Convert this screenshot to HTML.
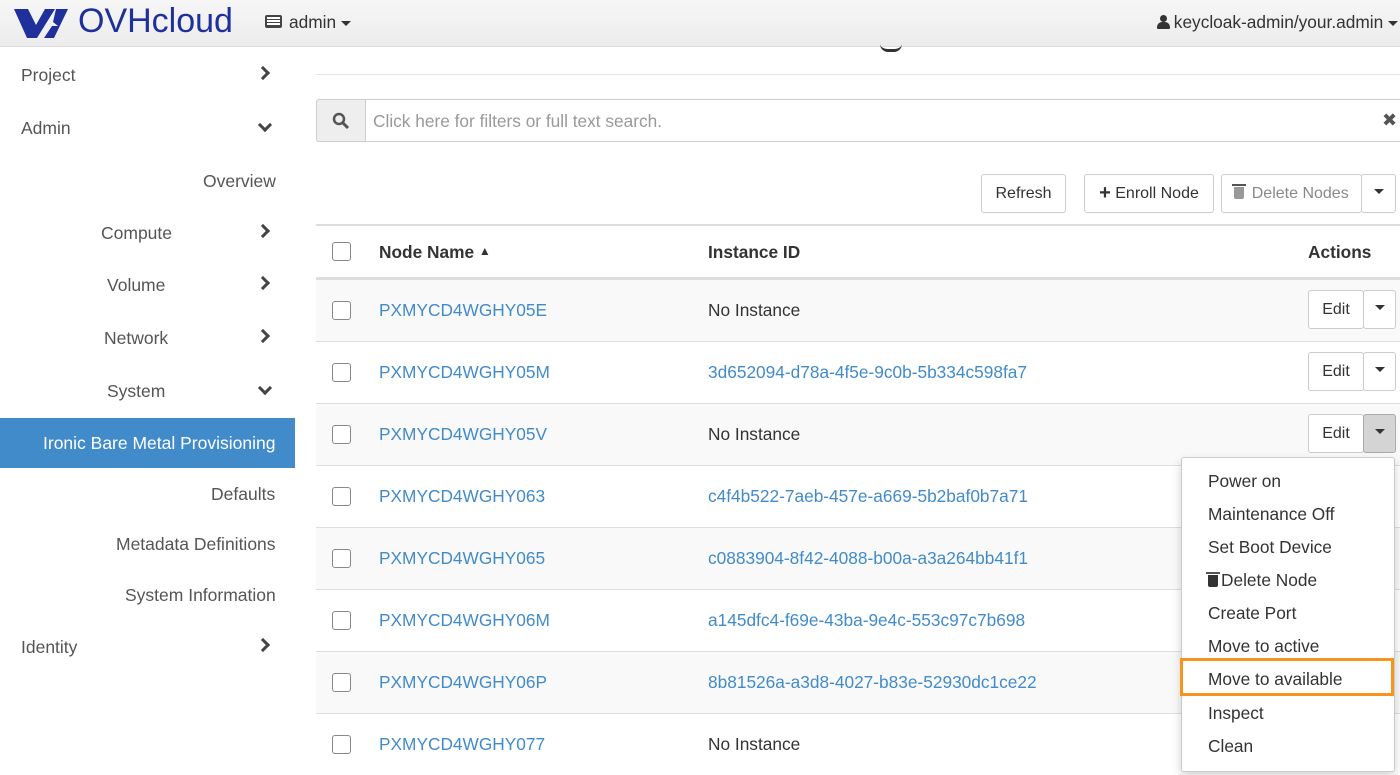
<!DOCTYPE html><html><head><style>
*{box-sizing:border-box;margin:0;padding:0}
body{width:1400px;height:772px;overflow:hidden;background:#fff;font-family:"Liberation Sans",sans-serif;font-size:17.3px;color:#333;position:relative}
.abs{position:absolute}
.hdr{left:0;top:0;width:1400px;height:47px;background:linear-gradient(#f6f6f6,#ececec);border-bottom:1px solid #ddd}
.side a{position:absolute;color:#555;font-size:17.5px;white-space:nowrap}
.chev{position:absolute;width:10px;height:10px;border-right:3px solid #444;border-bottom:3px solid #444}
.r{transform:rotate(-45deg)}.d{transform:rotate(45deg)}
.row{position:absolute;left:316px;width:1084px;height:62px;border-top:1px solid #ddd}
.row.s{background:#f9f9f9}
.cb{position:absolute;left:16px;width:19px;height:19px;border:1px solid #888;border-radius:3px;background:#fff}
.row .n{position:absolute;left:63px;top:20px;color:#428bca}
.row .i{position:absolute;left:392px;top:20px}
.row .i.l{color:#428bca}
.btn{position:absolute;border:1px solid #ccc;border-radius:3px;background:#fff;font-size:16px;color:#333;text-align:center}
.caret{display:inline-block;width:0;height:0;border-left:5px solid transparent;border-right:5px solid transparent;border-top:5px solid #333;vertical-align:middle}
.menu div{position:absolute;left:26px;font-size:17.3px;color:#333}
.trash{display:inline-block;width:10px;height:12px;background:#555;border-radius:0 0 2px 2px;position:relative;margin-right:3px;vertical-align:-1px}
.trash:before{content:"";position:absolute;left:-2px;top:-3px;width:14px;height:2px;background:#555}
</style></head><body>
<div class="abs hdr"></div>
<svg class="abs" style="left:12px;top:7px" width="58" height="32" viewBox="0 0 58 32"><path d="M2 2h14l8 16 9-16h10L25 31H15z" fill="#1f2f9c"/><path d="M44 2h12L42 31H32l8-12h6l-5-4z" fill="#1f2f9c"/></svg>
<div class="abs" style="left:78px;top:2px;font-size:34px;color:#1f2f9c">OVHcloud</div>
<div class="abs" style="left:265px;top:15px;width:17px;height:13px;border:2px solid #444;border-radius:2px;background:repeating-linear-gradient(#fff 0 2px,#444 2px 3px)"></div>
<div class="abs" style="left:289px;top:12px;color:#333">admin <span class="caret"></span></div>
<div class="abs" style="left:1157px;top:12px;color:#333;white-space:nowrap"><span style="display:inline-block;width:12px;height:14px;position:relative;vertical-align:-1px"><i style="position:absolute;left:3px;top:0;width:7px;height:7px;border-radius:50%;background:#333"></i><i style="position:absolute;left:0;top:7px;width:13px;height:7px;border-radius:5px 5px 1px 1px;background:#333"></i></span> keycloak-admin/your.admin <span class="caret"></span></div>
<div class="abs" style="left:880px;top:44px;width:22px;height:8px;border-bottom:3px solid #333;border-radius:0 0 11px 11px"></div>
<div class="side">
<a style="left:21px;top:65px">Project</a><i class="chev r" style="left:258px;top:68px"></i>
<a style="left:21px;top:118px">Admin</a><i class="chev d" style="left:260px;top:120px"></i>
<a style="left:203px;top:171px">Overview</a>
<a style="left:101px;top:223px">Compute</a><i class="chev r" style="left:258px;top:226px"></i>
<a style="left:107px;top:275px">Volume</a><i class="chev r" style="left:258px;top:278px"></i>
<a style="left:104px;top:328px">Network</a><i class="chev r" style="left:258px;top:331px"></i>
<a style="left:107px;top:381px">System</a><i class="chev d" style="left:260px;top:383px"></i>
</div>
<div class="abs" style="left:0;top:418px;width:295px;height:50px;background:#428bca"></div>
<div class="side">
<a style="left:43px;top:433px;color:#fff">Ironic Bare Metal Provisioning</a>
<a style="left:211px;top:484px">Defaults</a>
<a style="left:116px;top:534px">Metadata Definitions</a>
<a style="left:125px;top:585px">System Information</a>
<a style="left:21px;top:637px">Identity</a><i class="chev r" style="left:258px;top:640px"></i>
</div>
<div class="abs" style="left:316px;top:74px;width:1084px;border-top:1px solid #e5e5e5"></div>
<div class="abs" style="left:316px;top:99px;width:1090px;height:43px;border:1px solid #ccc;border-radius:3px"></div>
<div class="abs" style="left:316px;top:99px;width:50px;height:43px;background:#eee;border:1px solid #ccc;border-radius:3px 0 0 3px"></div>
<svg class="abs" style="left:332px;top:112px" width="18" height="18"><circle cx="7" cy="7" r="5" stroke="#555" stroke-width="2.5" fill="none"/><path d="M11 11l5 5" stroke="#555" stroke-width="3"/></svg>
<div class="abs" style="left:373px;top:111px;color:#999">Click here for filters or full text search.</div>
<div class="abs" style="left:1382px;top:110px;font-size:18px;color:#555">&#10006;</div>
<div class="btn" style="left:981px;top:174px;width:85px;height:39px;line-height:37px">Refresh</div>
<div class="btn" style="left:1084px;top:174px;width:130px;height:39px;line-height:37px"><b style="font-size:20px;vertical-align:-1px">+</b> Enroll Node</div>
<div class="btn" style="left:1221px;top:174px;width:141px;height:39px;line-height:37px;color:#888"><span class="trash" style="background:#999"></span> Delete Nodes</div>
<div class="btn" style="left:1361px;top:174px;width:35px;height:39px;line-height:34px"><span class="caret"></span></div>
<div class="abs" style="left:316px;top:224px;width:1084px;border-top:2px solid #ddd"></div>
<div class="cb abs" style="left:332px;top:242px"></div>
<div class="abs" style="left:379px;top:242px;font-weight:bold">Node Name <span style="font-size:12px;vertical-align:3px">&#9650;</span></div>
<div class="abs" style="left:708px;top:242px;font-weight:bold">Instance ID</div>
<div class="abs" style="left:1308px;top:242px;font-weight:bold">Actions</div>
<div class="abs" style="left:316px;top:277px;width:1084px;border-top:2px solid #ddd"></div>
<div class="row s" style="top:279px"><div class="cb" style="top:21px"></div><div class="n">PXMYCD4WGHY05E</div><div class="i">No Instance</div></div>
<div class="row" style="top:341px"><div class="cb" style="top:21px"></div><div class="n">PXMYCD4WGHY05M</div><div class="i l">3d652094-d78a-4f5e-9c0b-5b334c598fa7</div></div>
<div class="row s" style="top:403px"><div class="cb" style="top:21px"></div><div class="n">PXMYCD4WGHY05V</div><div class="i">No Instance</div></div>
<div class="row" style="top:465px"><div class="cb" style="top:21px"></div><div class="n">PXMYCD4WGHY063</div><div class="i l">c4f4b522-7aeb-457e-a669-5b2baf0b7a71</div></div>
<div class="row s" style="top:527px"><div class="cb" style="top:21px"></div><div class="n">PXMYCD4WGHY065</div><div class="i l">c0883904-8f42-4088-b00a-a3a264bb41f1</div></div>
<div class="row" style="top:589px"><div class="cb" style="top:21px"></div><div class="n">PXMYCD4WGHY06M</div><div class="i l">a145dfc4-f69e-43ba-9e4c-553c97c7b698</div></div>
<div class="row s" style="top:651px"><div class="cb" style="top:21px"></div><div class="n">PXMYCD4WGHY06P</div><div class="i l">8b81526a-a3d8-4027-b83e-52930dc1ce22</div></div>
<div class="row" style="top:713px"><div class="cb" style="top:21px"></div><div class="n">PXMYCD4WGHY077</div><div class="i">No Instance</div></div>
<div class="btn" style="left:1308px;top:290px;width:56px;height:39px;line-height:37px">Edit</div><div class="btn" style="left:1363px;top:290px;width:33px;height:39px;line-height:34px"><span class="caret"></span></div>
<div class="btn" style="left:1308px;top:352px;width:56px;height:39px;line-height:37px">Edit</div><div class="btn" style="left:1363px;top:352px;width:33px;height:39px;line-height:34px"><span class="caret"></span></div>
<div class="btn" style="left:1308px;top:414px;width:56px;height:39px;line-height:37px">Edit</div><div class="btn" style="left:1363px;top:414px;width:33px;height:39px;line-height:34px;background:#d4d4d4;border-color:#aaa"><span class="caret"></span></div>
<div class="abs menu" style="left:1181px;top:457px;width:214px;height:315px;background:#fff;border:1px solid #ccc;border-radius:3px;box-shadow:0 4px 10px rgba(0,0,0,.18)">
<div style="top:13px">Power on</div><div style="top:46px">Maintenance Off</div><div style="top:79px">Set Boot Device</div><div style="top:112px"><span class="trash" style="background:#333"></span>Delete Node</div><div style="top:145px">Create Port</div><div style="top:178px">Move to active</div><div style="top:211px">Move to available</div><div style="top:245px">Inspect</div><div style="top:278px">Clean</div>
</div>
<div class="abs" style="left:1180px;top:658px;width:214px;height:38px;border:3px solid #f7941d"></div>
</body></html>
